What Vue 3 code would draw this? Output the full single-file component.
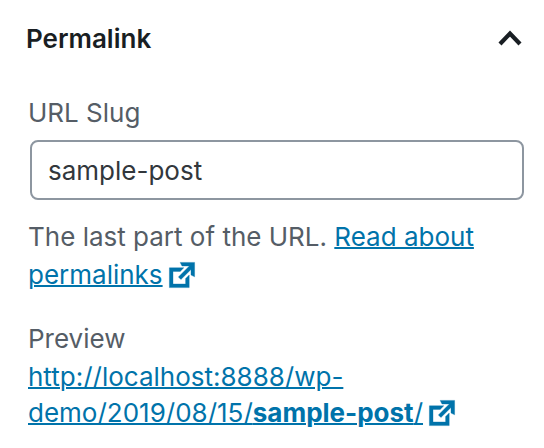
<script setup>
import { ref } from 'vue'

const open = ref(true)
const slug = ref('sample-post')
</script>

<template>
  <section class="panel">
    <h2 class="heading">
      <button class="toggle" type="button" :aria-expanded="open" @click="open = !open">
        <span>Permalink</span>
        <svg class="chevron" :class="{ closed: !open }" viewBox="0 0 24 18" aria-hidden="true">
          <path d="M2 14 L12 3.500 L22 14" fill="none" stroke="currentColor" stroke-width="4.200" />
        </svg>
      </button>
    </h2>
    <div v-if="open" class="content">
      <label class="label" for="slug">URL Slug</label>
      <div class="control">
        <input id="slug" v-model="slug" class="field" type="text" />
      </div>
      <p class="help">
        The last part of the URL.
        <a href="#permalinks">Read about permalinks</a>
        <svg class="external" viewBox="0 0 20 20" aria-hidden="true">
          <path d="M9 3h8v8l-2-1V6.92l-5.6 5.59-1.41-1.41L14.08 5H10zm3 12v-3l2-2v7H3V6h8L9 8H5v7h7z" />
        </svg>
      </p>
      <p class="preview-label">Preview</p>
      <p class="preview">
        <a href="#preview">http://localhost:8888/wp-demo/2019/08/15/<strong>sample-post</strong>/</a>
        <svg class="external" viewBox="0 0 20 20" aria-hidden="true">
          <path d="M9 3h8v8l-2-1V6.92l-5.6 5.59-1.41-1.41L14.08 5H10zm3 12v-3l2-2v7H3V6h8L9 8H5v7h7z" />
        </svg>
      </p>
    </div>
  </section>
</template>

<style>
body {
  background: #fff;
}
</style>

<style scoped>
.panel {
  padding: 20px 20px 12px 28px;
  font-family: Inter, "Liberation Sans", sans-serif;
  font-size: 26px;
  line-height: 36px;
  color: #555d66;
}
.heading {
  margin: 0 2px 0 -2px;
  font-size: 26px;
}
.toggle {
  display: flex;
  align-items: center;
  justify-content: space-between;
  width: 100%;
  padding: 0;
  border: 0;
  background: none;
  color: #191e23;
  font: inherit;
  font-weight: 600;
  line-height: 38px;
  cursor: pointer;
}
.chevron {
  width: 24px;
  height: 18px;
}
.closed {
  transform: rotate(180deg);
}
.content {
  padding-top: 37px;
}
.label {
  display: block;
}
.control {
  padding: 9px 0 0 2px;
}
.field {
  box-sizing: border-box;
  display: block;
  width: 100%;
  height: 60px;
  padding: 0 16px;
  border: 2px solid #8d96a0;
  border-radius: 8px;
  background: #fff;
  color: #32373c;
  font: inherit;
}
.help {
  margin: 18px 0 0;
  line-height: 38px;
}
.preview-label {
  margin: 27px 0 0;
}
.preview {
  margin: 2px 0 0;
}
a {
  color: #0073aa;
  text-decoration-thickness: 2px;
}
.external {
  width: 36px;
  height: 36px;
  margin: -8px 0 -4px 1px;
  fill: #0073aa;
  stroke: #0073aa;
  stroke-width: 0.2;
  vertical-align: middle;
}
</style>
